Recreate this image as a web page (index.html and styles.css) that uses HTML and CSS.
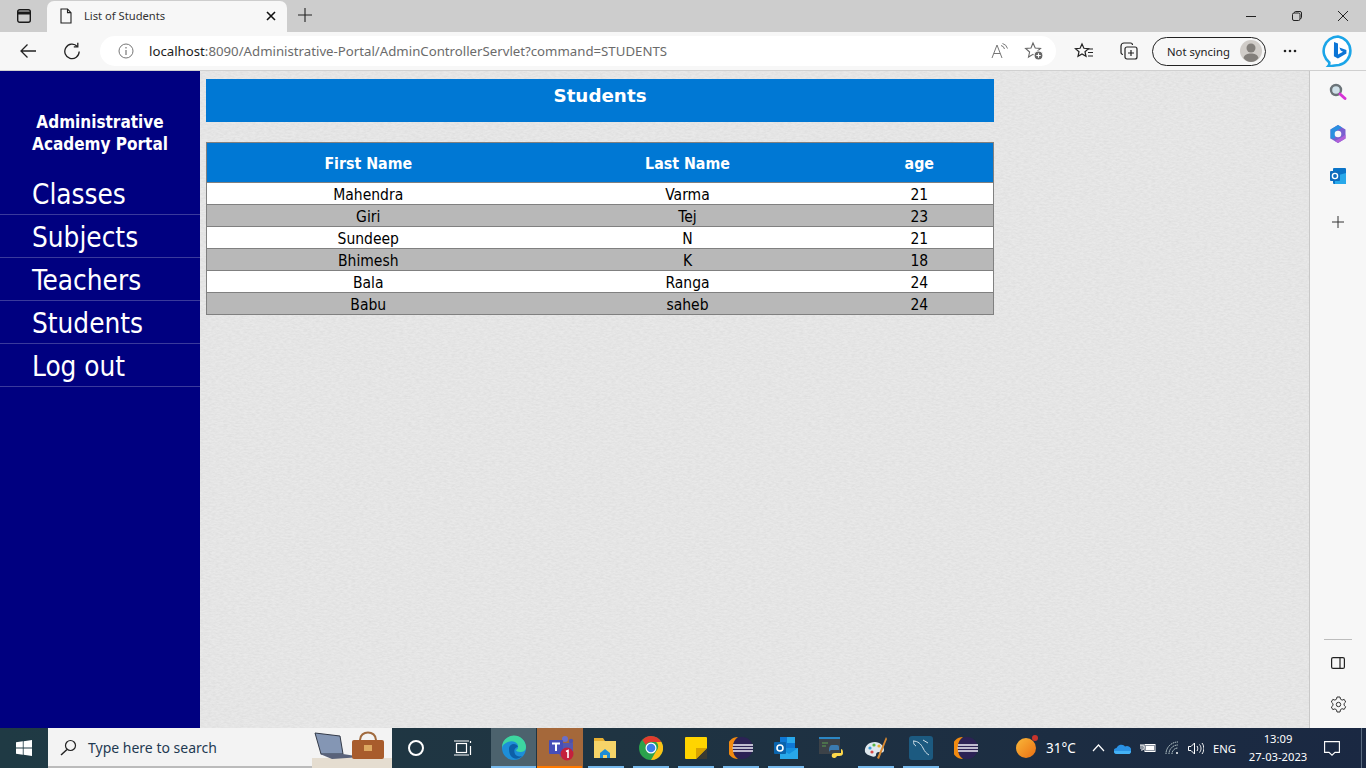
FILE: index.html
```html
<!DOCTYPE html>
<html lang="en">
<head>
<meta charset="utf-8">
<title>List of Students</title>
<link rel="stylesheet" href="styles.css">
</head>
<body>
<header class="tabbar">
  <div class="tabstrip-btn">
    <svg width="16" height="16" viewBox="0 0 16 16" fill="none" stroke="#1a1a1a" stroke-width="1.4"><rect x="1.7" y="1.7" width="12.6" height="12.6" rx="2"/><path d="M1.7 5h12.6" stroke-width="3"/></svg>
  </div>
  <div class="tab">
    <svg width="14" height="16" viewBox="0 0 14 16" fill="none" stroke="#222" stroke-width="1.1"><path d="M2 1h6.5L12 4.6V15H2z"/><path d="M8.5 1v3.6H12"/></svg>
    <span class="tab-title">List of Students</span>
    <svg class="tab-close" width="10" height="10" viewBox="0 0 10 10" stroke="#111" stroke-width="1.6"><path d="M1 1l8 8M9 1l-8 8"/></svg>
  </div>
  <svg class="new-tab" width="14" height="14" viewBox="0 0 14 14" stroke="#222" stroke-width="1.1"><path d="M7 0v14M0 7h14"/></svg>
  <div class="winctl">
    <svg width="12" height="12" viewBox="0 0 12 12" stroke="#222"><path d="M1 6.5h10"/></svg>
    <svg width="12" height="12" viewBox="0 0 12 12" fill="none" stroke="#222"><rect x="1.5" y="3" width="7.5" height="7.5" rx="1.5"/><path d="M3.5 3V2.5a1 1 0 0 1 1-1h4.5a1.5 1.5 0 0 1 1.5 1.5v4.500a1 1 0 0 1-1 1H9"/></svg>
    <svg width="12" height="12" viewBox="0 0 12 12" stroke="#222"><path d="M1 1l10 10M11 1L1 11"/></svg>
  </div>
</header>

<nav class="toolbar">
  <svg class="tb-back" width="18" height="16" viewBox="0 0 18 16" fill="none" stroke="#222" stroke-width="1.3"><path d="M17 8H2M8.500 1.500L2 8l6.500 6.500"/></svg>
  <svg class="tb-reload" width="18" height="18" viewBox="0 0 18 18" fill="none" stroke="#222" stroke-width="1.3"><path d="M14.300 4.500A7.200 7.200 0 1 0 16.200 9.500"/><path d="M14.800 0.800V4.800H10.800"/></svg>
  <div class="address">
    <svg width="16" height="16" viewBox="0 0 16 16" fill="none" stroke="#777"><circle cx="8" cy="8" r="7"/><path d="M8 7v5M8 4v1.500" stroke-width="1.200"/></svg>
    <span class="url"><span class="host">localhost</span>:8090/Administrative-Portal/AdminControllerServlet?command=STUDENTS</span>
    <svg class="addr-read" width="18" height="16" viewBox="0 0 18 16" fill="none" stroke="#777" stroke-width="1"><path d="M1 15L6 2l5 13M2.800 10.500h6.400"/><path d="M10 2.500a4.500 4.500 0 0 1 3.500 3.500M11.500 0.500a7 7 0 0 1 5 5"/></svg>
    <svg class="addr-fav" width="20" height="20" viewBox="0 0 20 20" fill="none" stroke="#666" stroke-width="1.100"><path d="M9 2l2.200 5 5.300.5-4 3.500 1 5-4.500-2.700L4.500 16l1.100-5-4-3.500L7 7z"/><circle cx="14.500" cy="14.500" r="4.500" fill="#666" stroke="#fff"/><path d="M14.500 12.300v4.400M12.300 14.500h4.400" stroke="#fff"/></svg>
  </div>
  <svg class="tb-favs" width="20" height="18" viewBox="0 0 20 18" fill="none" stroke="#222" stroke-width="1.200"><path d="M8 2l1.900 4.300 4.600.4-3.500 3 1 4.600L8 12l-4 2.300 1-4.600-3.500-3 4.600-.4z"/><path d="M14 7h5M14 10.500h5M14 14h5"/></svg>
  <svg class="tb-coll" width="18" height="18" viewBox="0 0 18 18" fill="none" stroke="#222" stroke-width="1.200"><path d="M3 12.500A2 2 0 0 1 1 10.500V4a3 3 0 0 1 3-3h6.500A2 2 0 0 1 12.500 3"/><rect x="5" y="5" width="12" height="12" rx="2"/><path d="M11 8v6M8 11h6"/></svg>
  <div class="sync">
    <span>Not syncing</span>
    <svg width="22" height="22" viewBox="0 0 22 22"><circle cx="11" cy="11" r="11" fill="#d0ccc8"/><circle cx="11" cy="8" r="4.500" fill="#837f7b"/><path d="M3.500 18c1-3.500 4-4.500 7.500-4.500s6.500 1 7.500 4.500c-2 2.500-4.500 4-7.500 4s-5.500-1.500-7.500-4z" fill="#837f7b"/></svg>
  </div>
  <svg class="tb-more" width="14" height="4" viewBox="0 0 14 4" fill="#222"><circle cx="2" cy="2" r="1.300"/><circle cx="7" cy="2" r="1.300"/><circle cx="12" cy="2" r="1.300"/></svg>
  <svg class="tb-bing" width="32" height="32" viewBox="0 0 32 32"><path d="M16 1.500a14.500 14.500 0 0 1 1 28.500c-3 .2-8 1-11 1.500 1-1 1.500-2.500 1.300-4A14.500 14.500 0 0 1 16 1.500z" fill="#fff" stroke="#1ba5e8" stroke-width="2.600"/><path d="M12 7l4 1.500v11l5-2.800-2.300-1.100-1.300-3.100 7 2.400v3.600l-8.500 5-4-2.200z" fill="#0c75d6"/></svg>
</nav>

<div class="workspace">
  <aside class="sidebar">
    <h2 class="brand">Administrative<br>Academy Portal</h2>
    <ul class="menu">
      <li>Classes</li>
      <li>Subjects</li>
      <li>Teachers</li>
      <li>Students</li>
      <li>Log out</li>
    </ul>
  </aside>
  <main class="content">
    <h1 class="page-title">Students</h1>
    <table class="students">
      <colgroup><col class="c1"><col class="c2"><col class="c3"></colgroup>
      <thead><tr><th>First Name</th><th>Last Name</th><th>age</th></tr></thead>
      <tbody>
        <tr><td>Mahendra</td><td>Varma</td><td>21</td></tr>
        <tr><td>Giri</td><td>Tej</td><td>23</td></tr>
        <tr><td>Sundeep</td><td>N</td><td>21</td></tr>
        <tr><td>Bhimesh</td><td>K</td><td>18</td></tr>
        <tr><td>Bala</td><td>Ranga</td><td>24</td></tr>
        <tr><td>Babu</td><td>saheb</td><td>24</td></tr>
      </tbody>
    </table>
  </main>
  <aside class="rail">
    <svg class="r-search" width="20" height="20" viewBox="0 0 20 20" fill="none"><circle cx="8" cy="8" r="5" stroke="#6b7378" stroke-width="2.400" fill="#cfe0e8"/><path d="M12 12l5 4.500" stroke="#d633d6" stroke-width="3" stroke-linecap="round"/></svg>
    <svg class="r-m365" width="18" height="20" viewBox="0 0 18 20" fill="none"><path d="M9 1l7.500 4.500v9L9 19l-7.500-4.500v-9z" fill="#7a5fd0"/><path d="M1.500 5.500L9 1l4 2.400-5 3L6 11v3.500l-4.500 0z" fill="#2a8fe0"/><path d="M16.500 14.500L9 19l-3-2 8-4.500 2.500-2z" fill="#b060d8"/><circle cx="9" cy="10" r="3.300" fill="#f7f7f7"/></svg>
    <svg class="r-outlook" width="17" height="17" viewBox="0 0 17 17"><rect x="3" y="0" width="13" height="16" rx="1" fill="#0a74c8"/><path d="M5 8l11-3v11H5z" fill="#28a8ea"/><rect x="0" y="3" width="10" height="10" rx="1" fill="#0f6cbd"/><circle cx="5" cy="8" r="2.600" fill="none" stroke="#fff" stroke-width="1.400"/></svg>
    <svg class="r-plus" width="12" height="12" viewBox="0 0 12 12" stroke="#333"><path d="M6 0v12M0 6h12"/></svg>
    <span class="r-spacer"></span>
    <span class="r-rule"></span>
    <svg class="r-panel" width="14" height="12" viewBox="0 0 14 12" fill="none" stroke="#222" stroke-width="1.200"><rect x=".6" y=".6" width="12.800" height="10.800" rx="1.500"/><path d="M9 .6v10.800"/></svg>
    <svg class="r-gear" width="17" height="17" viewBox="0 0 17 17" fill="none" stroke="#333" stroke-width="1"><path d="M7 1h3l.5 2.200 1.600.9 2.100-.7 1.500 2.600-1.600 1.500v1.800l1.600 1.500-1.500 2.600-2.100-.7-1.600.9L10 16H7l-.5-2.200-1.600-.9-2.100.7-1.500-2.600L3 9.500V7.700L1.300 6l1.500-2.600 2.100.7 1.600-.9z"/><circle cx="8.500" cy="8.500" r="2.200"/></svg>
  </aside>
</div>

<footer class="taskbar">
  <div class="start">
    <svg width="16" height="16" viewBox="0 0 16 16" fill="#fff"><path d="M0 2.300l6.800-1v6.300H0zM7.600 1.200L16 0v7.600H7.600zM0 8.400h6.800v6.300l-6.800-1zM7.600 8.400H16V16l-8.400-1.200z"/></svg>
  </div>
  <div class="search">
    <svg width="17" height="17" viewBox="0 0 17 17" fill="none" stroke="#222" stroke-width="1.200"><circle cx="10.500" cy="6.500" r="5"/><path d="M7 10.500L1 16" stroke-width="1.500"/></svg>
    <span class="search-text">Type here to search</span>
    <svg class="search-art" width="80" height="40" viewBox="0 0 80 40"><rect x="0" y="30" width="80" height="10" fill="#e5ddd0"/><path d="M3 5l25 3 3 18-22 0z" fill="#8496b4" stroke="#333a48"/><path d="M8 26l23 0 19 3-30 2z" fill="#59627a"/><rect x="40" y="12" width="32" height="19" rx="2" fill="#a85c2c"/><path d="M48 12c0-10 16-10 16 0" fill="none" stroke="#a06a3e" stroke-width="2"/><rect x="52" y="17" width="8" height="6" fill="#dda860"/></svg>
  </div>
  <div class="tb-cortana"><span class="ring"></span></div>
  <div class="tb-view">
    <svg width="18" height="16" viewBox="0 0 18 16" fill="none" stroke="#fff" stroke-width="1.200"><rect x="2.500" y="3.500" width="10" height="9"/><path d="M0 1h15M0 15h15M16.500 1v2M16.500 6v9" /></svg>
  </div>
  <div class="slot slot-active on">
    <svg width="26" height="26" viewBox="0 0 26 26"><circle cx="13" cy="13" r="12" fill="#1d8ed8"/><path d="M1 13a12 12 0 0 1 24-1c0 4-3 5-6 5-2 0-4-1-4-2 3-1 3-6-1-8-5-2-12 1-13 6z" fill="#3dd6a0"/><path d="M8 14c0-5 7-7 9-2-2 0-5 2-3 7 1 2 4 3 7 2-5 5-13 3-13-7z" fill="#0c5fa8"/></svg>
  </div>
  <div class="slot slot-teams on">
    <svg width="28" height="28" viewBox="0 0 28 28"><circle cx="18" cy="5" r="3" fill="#6a6fc9"/><circle cx="24" cy="7" r="2.200" fill="#4d52ad"/><path d="M12 9h14v9a6 6 0 0 1-14 0z" fill="#5558af"/><rect x="2" y="6" width="14" height="14" rx="1" fill="#464eb8"/><path d="M5 9.500h8M9 9.500V17" stroke="#fff" stroke-width="2"/><circle cx="20" cy="20" r="6.500" fill="#c4203c"/><path d="M19 17.500l2-1V24" stroke="#fff" stroke-width="1.600" fill="none"/></svg>
  </div>
  <div class="slot on">
    <svg width="24" height="22" viewBox="0 0 24 22"><path d="M0 1h9l2 3h11v3H0z" fill="#e8b032"/><rect x="0" y="4" width="22" height="17" fill="#f6d468"/><path d="M6 21v-5l5-4 5 4v5h-3v-3H9v3z" fill="#1e8cd6"/></svg>
  </div>
  <div class="slot on">
    <svg width="24" height="24" viewBox="0 0 24 24"><circle cx="12" cy="12" r="12" fill="#2ba24c"/><path d="M12 0a12 12 0 0 1 10.400 6H12a6 6 0 0 0-5.200 3L3.500 4A12 12 0 0 1 12 0z" fill="#e33b2e"/><path d="M22.400 6A12 12 0 0 1 12 24l5.200-9a6 6 0 0 0 0-9z" fill="#fbc116"/><circle cx="12" cy="12" r="5.500" fill="#fff"/><circle cx="12" cy="12" r="4.300" fill="#3b7de8"/></svg>
  </div>
  <div class="slot on">
    <svg width="22" height="22" viewBox="0 0 22 22"><rect width="22" height="22" rx="1" fill="#ffd400"/><path d="M11 22L22 11v11z" fill="#3a3a32"/><path d="M11 22l11-11H11z" fill="#d8a200"/></svg>
  </div>
  <div class="slot on">
    <svg class="eclipse" width="24" height="24" viewBox="0 0 24 24"><defs><g id="eclipse-mark"><circle cx="13" cy="12" r="11" fill="#2c2255"/><path d="M9 1a11 11 0 0 0 0 22 12 12 0 0 1-5-11A12 12 0 0 1 9 1z" fill="#f28a10"/><path d="M4 9h20M3.500 12h21M4 15h20" stroke="#f0eef8" stroke-width="1.300"/></g></defs><use href="#eclipse-mark"/></svg>
  </div>
  <div class="slot on">
    <svg width="24" height="22" viewBox="0 0 24 22"><rect x="6" y="0" width="15" height="12" fill="#0f78d4"/><rect x="13" y="0" width="8" height="6" fill="#28a8ea"/><path d="M6 11h18v11H6z" fill="#1490df"/><path d="M6 11l9 6 9-6v11H6z" fill="#28a8ea"/><rect x="0" y="5" width="12" height="12" rx="1" fill="#0a64ad"/><circle cx="6" cy="11" r="3" fill="none" stroke="#fff" stroke-width="1.600"/></svg>
  </div>
  <div class="slot">
    <svg width="24" height="24" viewBox="0 0 24 24"><rect x="0" y="1" width="21" height="17" fill="#3c4248"/><rect x="0" y="1" width="21" height="2" fill="#2b87c4"/><path d="M3 7h6M3 10h4" stroke="#5da050" stroke-width="1"/><path d="M13 9h5a2 2 0 0 1 2 2v3H12a3 3 0 0 0-2 3v-3c0-3 1-5 3-5z" fill="#3b7bb0"/><path d="M22 13c2 0 2 3 2 4 0 3-3 3-5 3h-1a3 3 0 0 1-5 1c-1-3 1-4 3-4h6z" fill="#ffd94a"/></svg>
  </div>
  <div class="slot on">
    <svg width="24" height="24" viewBox="0 0 24 24"><path d="M1 16C0 10 5 6 11 6c5 0 9 4 9 8 0 3-3 3-5 2-2 0-3 1-3 3 0 2-3 2-5 1-3-1-5-2-6-4z" fill="#dfe8ee"/><circle cx="6" cy="12" r="1.600" fill="#3a9ed8"/><circle cx="10" cy="9" r="1.600" fill="#58b848"/><circle cx="15" cy="10" r="1.600" fill="#e8b030"/><circle cx="8" cy="16" r="1.600" fill="#d84a4a"/><path d="M22 1l1 2-8 20-2-1z" fill="#d98a32"/></svg>
  </div>
  <div class="slot on">
    <svg width="24" height="24" viewBox="0 0 24 24" fill="none"><rect width="24" height="24" rx="3" fill="#1c5a80"/><path d="M4 5c5 0 8 3 10 7s3 5 6 7M5 5c-1 2 0 4 2 5M14 4l5 3" stroke="#cfdfe8" stroke-width="1"/></svg>
  </div>
  <div class="slot">
    <svg class="eclipse" width="24" height="24" viewBox="0 0 24 24"><use href="#eclipse-mark"/></svg>
  </div>
  <div class="weather">
    <span class="sun"><span class="sun-dot"></span></span>
    <span class="temp">31°C</span>
  </div>
  <div class="tray">
    <svg width="13" height="8" viewBox="0 0 13 8" fill="none" stroke="#fff" stroke-width="1.200"><path d="M1 7l5.500-6L12 7"/></svg>
    <svg width="17" height="11" viewBox="0 0 17 11"><path d="M3 11a3 3 0 0 1-.5-6A5 5 0 0 1 11 3.500 4 4 0 0 1 15 11z" fill="#2a92e4"/><path d="M0 8h17c0 2-1 3-2 3H3C1 11 0 10 0 8z" fill="#45b2f5"/></svg>
    <svg width="16" height="12" viewBox="0 0 16 12" fill="none" stroke="#fff"><rect x="5" y="2.500" width="10" height="7"/><rect x="6.500" y="4" width="7" height="4" fill="#fff"/><path d="M0 6h3M1 2v2M3 2v2M0 4h4v2a2 2 0 0 1-2 2H1"/></svg>
    <svg width="14" height="14" viewBox="0 0 14 14" fill="none" stroke="#cdd" stroke-width="1" stroke-dasharray="1.500 .7"><path d="M1 13A12 12 0 0 1 13 1M4 13a9 9 0 0 1 9-9M7 13a6 6 0 0 1 6-6"/><circle cx="12" cy="12" r="1" fill="#fff" stroke="none"/></svg>
    <svg width="16" height="13" viewBox="0 0 16 13" fill="none" stroke="#fff" stroke-width="1"><path d="M.5 4.500h2.500L6.500 1v11L3 8.500H.5z"/><path d="M9 4c1 1.500 1 3.500 0 5M11.500 2.500c2 2.500 2 5.500 0 8M14 1c2.500 3.500 2.500 7.500 0 11"/></svg>
    <span class="lang">ENG</span>
  </div>
  <div class="clock"><span>13:09</span><span>27-03-2023</span></div>
  <div class="notify">
    <svg width="16" height="15" viewBox="0 0 16 15" fill="none" stroke="#fff" stroke-width="1.100"><path d="M.6.600h14.800v10.800h-4.400L8 14.200 5 11.400H.6z"/></svg>
  </div>
  <span class="peek"></span>
</footer>
</body>
</html>
```
FILE: styles.css
```css
* { box-sizing: border-box; }
html, body { margin: 0; padding: 0; height: 100%; overflow: hidden; }
body { display: flex; flex-direction: column; height: 768px; width: 1366px; font-family: "Noto Sans", "Open Sans", sans-serif; color: #222; }
svg { display: block; flex: none; }

.tabbar { height: 32px; flex: none; background: #cdcdcd; display: flex; align-items: center; }
.tabstrip-btn { width: 47px; flex: none; padding-left: 16px; }
.tab { width: 240px; flex: none; height: 31px; margin-top: 1px; padding: 0 11px 1px 12px; background: #f7f7f7; border-radius: 7px 7px 0 0; display: flex; align-items: center; }
.tab-title { font-size: 11.200px; margin-left: 11px; margin-bottom: 2px; flex: 1; color: #333; }
.new-tab { margin-left: 11px; margin-top: -2px; }
.winctl { margin-left: auto; display: flex; gap: 34px; padding-right: 17px; }

.toolbar { height: 39px; flex: none; background: #f7f7f7; display: flex; align-items: center; border-bottom: 1px solid #d0d0d0; }
.tb-back { margin-left: 19px; }
.tb-reload { margin-left: 26px; }
.address { width: 956px; flex: none; height: 30px; margin-left: 19px; background: #fff; border-radius: 15px; display: flex; align-items: center; padding-left: 18px; }
.url { margin-left: 15px; font-size: 13.220px; color: #6b6b6b; white-space: nowrap; flex: 1; }
.host { color: #1c1c1c; }
.addr-read { margin-right: 15px; }
.addr-fav { margin-right: 12px; }
.tb-favs { margin-left: 18px; }
.tb-coll { margin-left: 26px; }
.sync { width: 114px; flex: none; height: 29px; margin-left: 14px; border: 1.300px solid #222; border-radius: 15px; display: flex; align-items: center; justify-content: space-between; padding: 0 3px 0 14px; font-size: 11.300px; }
.tb-more { margin-left: 17px; }
.tb-bing { margin-left: 25px; }

.workspace { flex: 1; min-height: 0; display: flex; }
.sidebar { width: 200px; flex: none; background: #000080; color: #fff; font-family: "DejaVu Sans Condensed", "DejaVu Sans", sans-serif; }
.brand { margin: 40px 0 17px; text-align: center; font-size: 17px; line-height: 22px; font-weight: 700; }
.menu { list-style: none; margin: 0; padding: 0; }
.menu li { height: 43px; padding-left: 32px; border-bottom: 1px solid #3a3a9c; font-size: 27.700px; line-height: 45px; }

.content { flex: 1; padding: 8px 0 0 6px; background-color: #e9e9e9; background-image: url("data:image/svg+xml,%3Csvg xmlns='http://www.w3.org/2000/svg' width='400' height='400'%3E%3Cfilter id='n'%3E%3CfeTurbulence type='fractalNoise' baseFrequency='.25 .6' numOctaves='4' seed='7'/%3E%3CfeColorMatrix values='0 0 0 0 .5 0 0 0 0 .5 0 0 0 0 .5 .38 0 0 0 -.1'/%3E%3C/filter%3E%3Crect width='400' height='400' filter='url(%23n)'/%3E%3C/svg%3E"); border-right: 1px solid #c8c8c8; }
.page-title { width: 788px; height: 43px; margin: 0 0 20px; background: #0078d4; color: #fff; text-align: center; font-family: "DejaVu Sans", sans-serif; font-size: 18.300px; line-height: 34px; font-weight: 700; }
.students { width: 787px; table-layout: fixed; border-collapse: collapse; border: 1px solid #808080; font-family: "DejaVu Sans Condensed", "DejaVu Sans", sans-serif; font-size: 15.500px; color: #000; }
.c1 { width: 323px; }
.c2 { width: 316px; }
.c3 { width: 148px; }
.students th { height: 40px; padding: 2px 0 0; background: #0078d4; color: #fff; font-size: 15.800px; font-weight: 700; border-bottom: 1px solid #808080; }
.students td { height: 22px; padding: 3px 0 0; text-align: center; line-height: 18px; border-bottom: 1px solid #808080; }
.students tbody tr:nth-child(odd) { background: #fff; }
.students tbody tr:nth-child(even) { background: #b8b8b8; }

.rail { width: 56px; flex: none; background: #f7f7f7; display: flex; flex-direction: column; align-items: center; padding-top: 11px; }
.r-m365 { margin-top: 22px; }
.r-outlook { margin-top: 24px; }
.r-plus { margin-top: 31px; }
.r-spacer { flex: 1; }
.r-rule { width: 28px; height: 1px; background: #bdbdbd; flex: none; }
.r-panel { margin-top: 17px; }
.r-gear { margin-top: 27px; margin-bottom: 15px; }

.taskbar { height: 40px; flex: none; display: flex; align-items: center; background: linear-gradient(90deg, #1f3a44 0%, #1f3442 45%, #1a2842 100%); color: #fff; }
.start { width: 48px; flex: none; height: 40px; display: flex; align-items: center; justify-content: center; }
.search { width: 344px; flex: none; height: 40px; background: #f3f3f3; border-bottom: 2px solid #bbb; display: flex; align-items: center; padding-left: 12px; position: relative; }
.search-text { margin-left: 11px; font-size: 14px; color: #1f3a52; }
.search-art { position: absolute; right: 0; top: 0; }
.tb-cortana { width: 48px; flex: none; display: flex; justify-content: center; }
.ring { width: 16px; height: 16px; border: 2.400px solid #fff; border-radius: 50%; }
.tb-view { width: 51px; flex: none; padding-left: 14px; }
.slot { width: 45px; flex: none; height: 40px; display: flex; align-items: center; justify-content: center; position: relative; }
.slot.on::after { content: ""; position: absolute; left: 5px; right: 4px; bottom: 0; height: 2px; background: #76b9ed; }
.slot-active { background: #4c626d; }
.slot-active.on::after { left: 0; right: 0; }
.slot-teams { background: #a5683a; margin-left: 1px; width: 46px; padding-left: 1px; }
.slot-teams.on::after { left: 0; right: 1px; background: #ff7a00; }
.weather { margin-left: 28px; width: 76px; flex: none; display: flex; align-items: center; }
.sun { width: 20px; height: 20px; border-radius: 50%; background: linear-gradient(135deg, #f9b83a, #ec6f12); position: relative; }
.sun-dot { position: absolute; right: -2px; top: -3px; width: 6px; height: 6px; border-radius: 50%; background: #c8342c; }
.temp { margin-left: 10px; font-size: 13.500px; }
.tray { display: flex; flex: none; align-items: center; gap: 9px; width: 144px; }
.lang { font-size: 11.200px; }
.clock { width: 84px; flex: none; display: flex; flex-direction: column; align-items: center; font-size: 11.200px; line-height: 18px; }
.notify { width: 24px; flex: none; display: flex; justify-content: center; }
.peek { width: 1px; height: 40px; background: #5a6b80; margin-left: 17px; flex: none; }
```
